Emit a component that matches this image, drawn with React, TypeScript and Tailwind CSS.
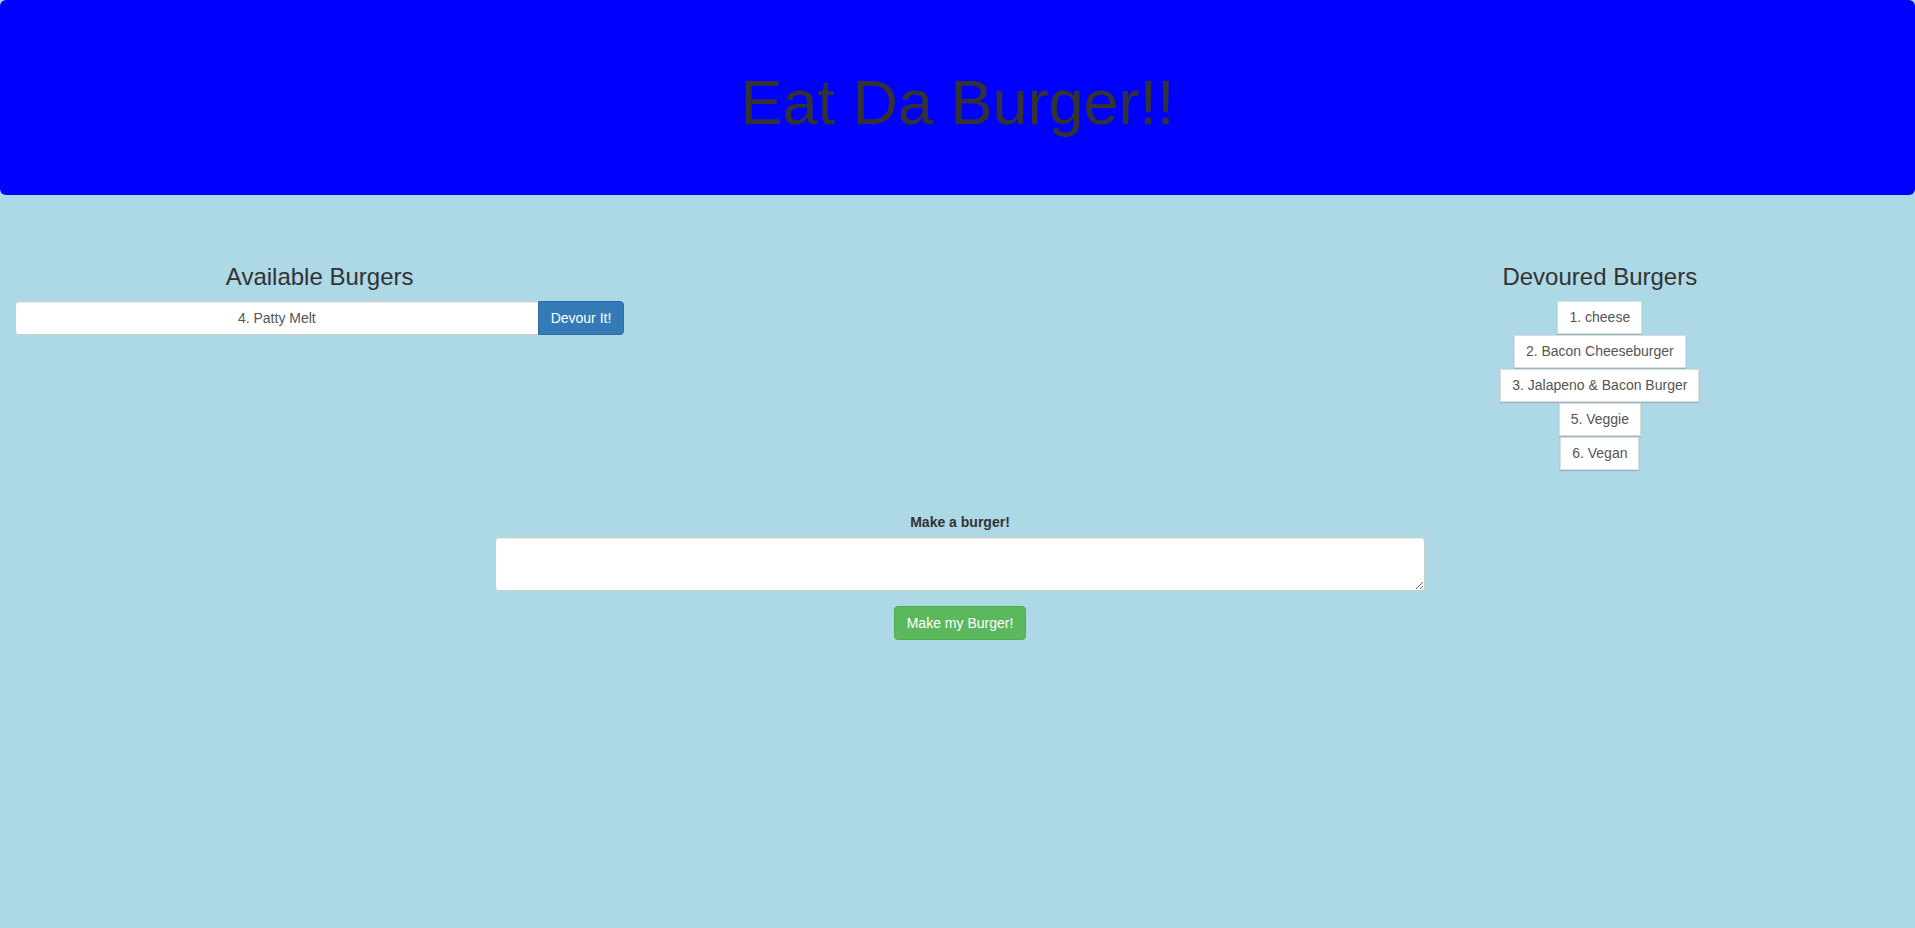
export default function App() {
  const devoured = [
    "1. cheese",
    "2. Bacon Cheeseburger",
    "3. Jalapeno & Bacon Burger",
    "5. Veggie",
    "6. Vegan",
  ];
  return (
    <div className="min-h-[928px] bg-[#add8e6] font-['Liberation_Sans',Arial,sans-serif] text-[14px] leading-[20px] text-[#333]">
      <div className="bg-[#0000ff] rounded-[6px] py-[48px] text-center">
        <h1 className="text-[63px] leading-[1.1] mt-[20px] mb-[10px] font-normal text-[#333]">
          Eat Da Burger!!
        </h1>
      </div>
      <div className="grid grid-cols-3 pt-[69px]">
        <div className="pl-[15px] pr-[14px]">
          <h3 className="text-[24px] leading-[26.4px] mb-[10px] text-center font-normal">
            Available Burgers
          </h3>
          <div className="flex">
            <div className="flex-1 h-[34px] bg-white border border-[#ccc] rounded-l-[4px] shadow-[inset_0_1px_1px_rgba(0,0,0,0.075)] text-center text-[#555] leading-[32px]">
              4. Patty Melt
            </div>
            <button className="h-[34px] px-[12px] bg-[#337ab7] border border-[#2e6da4] text-white rounded-r-[4px] -ml-px">
              Devour It!
            </button>
          </div>
        </div>
        <div></div>
        <div className="pl-[23px] pr-[15px]">
          <h3 className="text-[24px] leading-[26.4px] mb-[10px] text-center font-normal">
            Devoured Burgers
          </h3>
          <div className="flex flex-col items-center">
            {devoured.map((d) => (
              <div
                key={d}
                className="h-[33px] mb-px px-[11px] bg-white border border-[#ddd] shadow-[0_1px_1px_rgba(0,0,0,0.15)] text-[#555] leading-[31px]"
              >
                {d}
              </div>
            ))}
          </div>
        </div>
      </div>
      <div className="w-[930px] ml-[495px] mt-[41px] text-center">
        <label className="block font-bold mb-[5px]">Make a burger!</label>
        <textarea
          rows={2}
          className="block w-full h-[54px] bg-white border border-[#ccc] rounded-[4px] shadow-[inset_0_1px_1px_rgba(0,0,0,0.075)] px-[12px] py-[6px] text-[#555]"
        ></textarea>
        <button className="mt-[15px] h-[34px] px-[12px] bg-[#5cb85c] border border-[#4cae4c] text-white rounded-[4px]">
          Make my Burger!
        </button>
      </div>
    </div>
  );
}
